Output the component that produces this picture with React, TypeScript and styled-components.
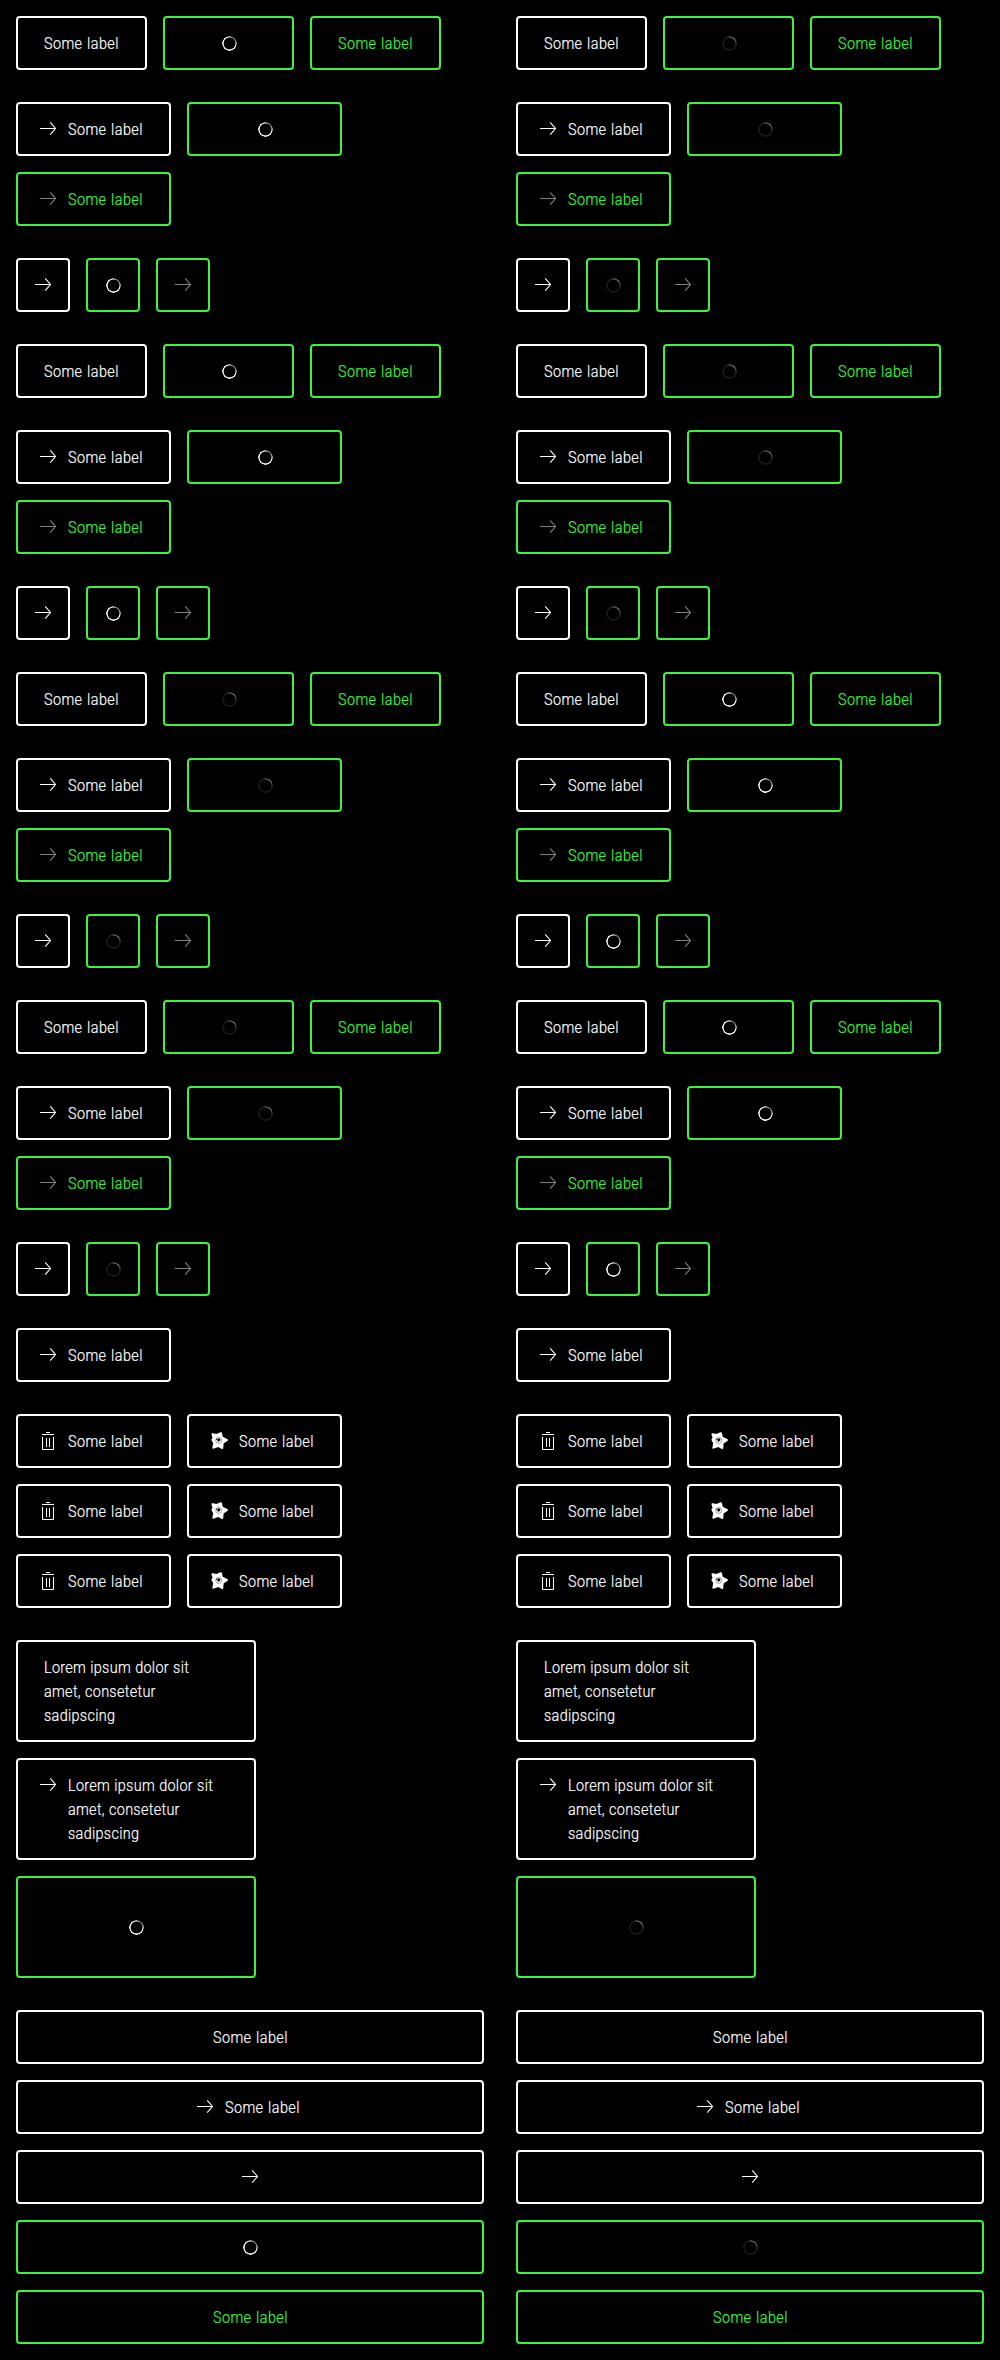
import React from "react";
import styled, { createGlobalStyle, css } from "styled-components";

const WHITE = "#ffffff";
const GREEN = "#3ff23f";

const GlobalStyle = createGlobalStyle`
  *, *::before, *::after { box-sizing: border-box; }
  body { margin: 0; background: #000; }
`;

const Page = styled.main`
  display: grid;
  grid-template-columns: 500px 500px;
  width: 1000px;
  height: 2360px;
  background: #000;
`;

const Column = styled.section`
  display: flex;
  flex-direction: column;
  gap: 32px;
  padding: 16px;
`;

const Group = styled.div<{ $stack?: boolean }>`
  display: flex;
  gap: 16px;
  ${({ $stack }) => ($stack ? css`flex-direction: column;` : css`flex-wrap: wrap;`)}
`;

type Size = "label" | "iconLabel" | "icon" | "multiline" | "block";

const widths: Record<Size, string> = {
  label: "131px",
  iconLabel: "155px",
  icon: "54px",
  multiline: "240px",
  block: "100%",
};

const ButtonBox = styled.button<{ $size: Size; $inactive?: boolean; $withIcon?: boolean }>`
  display: flex;
  align-items: flex-start;
  justify-content: ${({ $size }) => ($size === "multiline" ? "flex-start" : "center")};
  gap: 8px;
  width: ${({ $size }) => widths[$size]};
  min-height: ${({ $size }) => ($size === "multiline" ? "102px" : "54px")};
  margin: 0;
  padding: ${({ $size, $withIcon }) =>
    $size === "icon" ? "13px" : $withIcon ? "13px 26px 13px 18px" : "13px 26px"};
  border: 2px solid ${({ $inactive }) => ($inactive ? GREEN : WHITE)};
  border-radius: 4px;
  background: transparent;
  color: ${({ $inactive }) => ($inactive ? GREEN : WHITE)};
  font: 300 16px/24px Roboto, "Liberation Sans", sans-serif;
  text-align: left;
`;

const Label = styled.span<{ $wrap?: boolean }>`
  flex: none;
  width: ${({ $wrap }) => ($wrap ? "170px" : "75px")};
  min-width: 0;
  white-space: ${({ $wrap }) => ($wrap ? "normal" : "nowrap")};
  letter-spacing: ${({ $wrap }) => ($wrap ? "0.35px" : "0.46px")};
  word-spacing: ${({ $wrap }) => ($wrap ? "0.3px" : "0.8px")};
  -webkit-text-stroke: 0.2px currentColor;
  transform: translateY(1px) scaleX(0.9);
  transform-origin: 0 0;
`;

const IconSvg = styled.svg<{ $faded?: boolean }>`
  flex: none;
  display: block;
  width: 24px;
  height: 24px;
  color: ${WHITE};
  opacity: ${({ $faded }) => ($faded ? 0.5 : 1)};
`;

const SpinnerSlot = styled.span`
  align-self: center;
  display: flex;
  flex: 1;
  justify-content: center;
  padding: 1px 0 0 1px;
`;

const SpinnerRing = styled.span<{ $dim?: boolean }>`
  width: 15px;
  height: 15px;
  border-radius: 50%;
  background: ${({ $dim }) =>
    $dim
      ? "conic-gradient(#4c4c4c 0deg, #707070 50deg, #2c2c2c 90deg, #1c1c1c 120deg, #1c1c1c 330deg, #3a3a3a 360deg)"
      : "conic-gradient(#b4b4b4 0deg, #6a6a6a 40deg, #b0b0b0 90deg, #fff 115deg, #fff 320deg, #b4b4b4 360deg)"};
  mask: radial-gradient(circle at center, transparent 5.6px, #000 6.2px, #000 7.1px, transparent 7.6px);
`;

type IconName = "arrow" | "trash" | "star";

function Icon({ name, faded }: { name: IconName; faded?: boolean }) {
  return (
    <IconSvg viewBox="0 0 24 24" fill="none" stroke="currentColor" $faded={faded} aria-hidden="true">
      {name === "arrow" && <path strokeWidth="1.1" d="M4 11.5h15.5M14.2 5.4l5.3 6.1-5.3 6.1" />}
      {name === "trash" && <path d="M10 3.5h4M6 5.5h12M6.5 8v12.5h11V8M10.5 9v9M13.5 9v9" />}
      {name === "star" && (
        <>
          <path
            fill="currentColor"
            stroke="none"
            d="M4.4 5c0-.8.8-1 1.5-.7l3.5.8 3.5-1.6c1-.5 2-.2 2.1.8l.7 3.5 4.5 2.2c1.1.5 1.1 1.5.1 2l-3.7 2.4-.3 4.4c0 1.3-1 1.7-1.9 1l-3.2-1.7-4.1 1.4c-1.1.4-2 0-1.7-1.1l.8-4.2-1.5-2.6c-.5-.8-.2-1.6.4-2.1l.4-.8L4.4 5Z"
          />
          <circle cx="11.7" cy="11.4" r="3" stroke="#000" strokeOpacity=".45" strokeWidth=".8" />
          <path fill="#000" stroke="none" d="M10.6 9.9c1.4-.9 2.9-.2 2.7 1-.2 1-1.1.9-1.4 1.6-.8.4-1.5-.1-1.4-.9l.1-1.7Z" />
          <circle cx="9.9" cy="10.3" r=".7" fill="#000" stroke="none" />
        </>
      )}
    </IconSvg>
  );
}

interface ButtonProps {
  size: Size;
  icon?: IconName;
  text?: string;
  state?: "loading" | "disabled";
  dim?: boolean;
}

function Button({ size, icon, text, state, dim }: ButtonProps) {
  if (state === "loading") {
    return (
      <ButtonBox type="button" $size={size} $inactive>
        <SpinnerSlot>
          <SpinnerRing $dim={dim} />
        </SpinnerSlot>
      </ButtonBox>
    );
  }
  const disabled = state === "disabled";
  return (
    <ButtonBox type="button" $size={size} $inactive={disabled} $withIcon={!!icon && !!text}>
      {icon && <Icon name={icon} faded={disabled} />}
      {text && <Label $wrap={size === "multiline"}>{text}</Label>}
    </ButtonBox>
  );
}

const LABEL = "Some label";
const LOREM = "Lorem ipsum dolor sit amet, consetetur sadipscing";

function Variant({ dim }: { dim: boolean }) {
  return (
    <>
      <Group>
        <Button size="label" text={LABEL} />
        <Button size="label" state="loading" dim={dim} />
        <Button size="label" text={LABEL} state="disabled" />
      </Group>
      <Group>
        <Button size="iconLabel" icon="arrow" text={LABEL} />
        <Button size="iconLabel" state="loading" dim={dim} />
        <Button size="iconLabel" icon="arrow" text={LABEL} state="disabled" />
      </Group>
      <Group>
        <Button size="icon" icon="arrow" />
        <Button size="icon" state="loading" dim={dim} />
        <Button size="icon" icon="arrow" state="disabled" />
      </Group>
    </>
  );
}

function Theme({ variants, dim }: { variants: boolean[]; dim: boolean }) {
  return (
    <Column>
      {variants.map((d, i) => (
        <Variant key={i} dim={d} />
      ))}
      <Group>
        <Button size="iconLabel" icon="arrow" text={LABEL} />
      </Group>
      <Group>
        {[0, 1, 2].map((row) => (
          <React.Fragment key={row}>
            <Button size="iconLabel" icon="trash" text={LABEL} />
            <Button size="iconLabel" icon="star" text={LABEL} />
          </React.Fragment>
        ))}
      </Group>
      <Group $stack>
        <Button size="multiline" text={LOREM} />
        <Button size="multiline" icon="arrow" text={LOREM} />
        <Button size="multiline" state="loading" dim={dim} />
      </Group>
      <Group $stack>
        <Button size="block" text={LABEL} />
        <Button size="block" icon="arrow" text={LABEL} />
        <Button size="block" icon="arrow" />
        <Button size="block" state="loading" dim={dim} />
        <Button size="block" text={LABEL} state="disabled" />
      </Group>
    </Column>
  );
}

export default function App() {
  return (
    <>
      <GlobalStyle />
      <Page>
        <Theme variants={[false, false, true, true]} dim={false} />
        <Theme variants={[true, true, false, false]} dim />
      </Page>
    </>
  );
}
